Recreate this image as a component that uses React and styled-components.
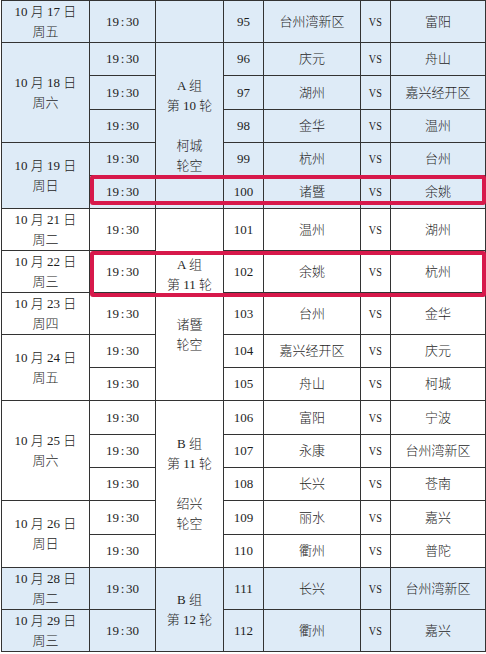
import React from 'react';
import styled, { createGlobalStyle } from 'styled-components';

const GlobalStyle = createGlobalStyle`
  html, body {
    margin: 0;
    padding: 0;
    background: #ffffff;
  }
  body {
    font-family: "Liberation Serif", "Noto Sans CJK SC", serif;
    color: #1e1e1e;
  }
`;

const Page = styled.div`
  padding-left: 1px;
`;

const Wrap = styled.div`
  position: relative;
  width: 485px;
`;

const Table = styled.table`
  border-collapse: collapse;
  table-layout: fixed;
  width: 484px;
  font-size: 13px;
  font-weight: 300;
  line-height: 14px;
`;

const Cell = styled.td`
  border: 1px solid #333;
  background: ${props => (props.$blue ? '#deebf7' : '#ffffff')};
  height: ${props => props.$h}px;
  box-sizing: border-box;
  padding: 0;
  text-align: center;
  vertical-align: middle;
  white-space: nowrap;
  overflow: hidden;
`;

const Line = styled.div`
  height: 20px;
  line-height: 20px;
  overflow: hidden;
`;

const Colon = styled.span`
  margin: 0 1.6px;
`;

const Vs = styled.span`
  display: inline-block;
  transform: scaleX(0.78);
`;

const Highlight = styled.div`
  position: absolute;
  left: ${props => props.$left}px;
  top: ${props => props.$top}px;
  width: ${props => props.$width}px;
  height: ${props => props.$height}px;
  box-sizing: border-box;
  border: 4.5px solid #d7194b;
  border-radius: 3px;
  pointer-events: none;
`;

const widths = [88, 66, 68, 40, 97, 30, 95];

const rows = [
  { date: ['10 月 17 日', '周五'], dateSpan: 1, group: { span: 1, lines: [], blue: true }, no: 95, home: '台州湾新区', away: '富阳', h: 42, blue: true },
  { date: ['10 月 18 日', '周六'], dateSpan: 3, group: { span: 5, lines: ['A 组', '第 10 轮', '', '柯城', '轮空'], blue: true }, no: 96, home: '庆元', away: '舟山', h: 33, blue: true },
  { no: 97, home: '湖州', away: '嘉兴经开区', h: 34, blue: true },
  { no: 98, home: '金华', away: '温州', h: 33, blue: true },
  { date: ['10 月 19 日', '周日'], dateSpan: 2, no: 99, home: '杭州', away: '台州', h: 33, blue: true },
  { no: 100, home: '诸暨', away: '余姚', h: 33, blue: true },
  { date: ['10 月 21 日', '周二'], dateSpan: 1, group: { span: 5, lines: ['A 组', '第 11 轮', '', '诸暨', '轮空'] }, no: 101, home: '温州', away: '湖州', h: 42 },
  { date: ['10 月 22 日', '周三'], dateSpan: 1, no: 102, home: '余姚', away: '杭州', h: 42 },
  { date: ['10 月 23 日', '周四'], dateSpan: 1, no: 103, home: '台州', away: '金华', h: 42 },
  { date: ['10 月 24 日', '周五'], dateSpan: 2, no: 104, home: '嘉兴经开区', away: '庆元', h: 33 },
  { no: 105, home: '舟山', away: '柯城', h: 33 },
  { date: ['10 月 25 日', '周六'], dateSpan: 3, group: { span: 5, lines: ['B 组', '第 11 轮', '', '绍兴', '轮空'] }, no: 106, home: '富阳', away: '宁波', h: 34 },
  { no: 107, home: '永康', away: '台州湾新区', h: 33 },
  { no: 108, home: '长兴', away: '苍南', h: 33 },
  { date: ['10 月 26 日', '周日'], dateSpan: 2, no: 109, home: '丽水', away: '嘉兴', h: 34 },
  { no: 110, home: '衢州', away: '普陀', h: 33 },
  { date: ['10 月 28 日', '周二'], dateSpan: 1, group: { span: 2, lines: ['B 组', '第 12 轮'], blue: true }, no: 111, home: '长兴', away: '台州湾新区', h: 42, blue: true },
  { date: ['10 月 29 日', '周三'], dateSpan: 1, no: 112, home: '衢州', away: '嘉兴', h: 42, blue: true },
];

const Schedule = () => (
  <Table>
    <colgroup>
      {widths.map((w, i) => (
        <col key={i} style={{ width: w }} />
      ))}
    </colgroup>
    <tbody>
      {rows.map(row => (
        <tr key={row.no}>
          {row.date && (
            <Cell rowSpan={row.dateSpan} $blue={row.blue} $h={row.h}>
              {row.date.map((t, i) => (
                <Line key={i}>{t}</Line>
              ))}
            </Cell>
          )}
          <Cell $blue={row.blue} $h={row.h}>19<Colon>:</Colon>30</Cell>
          {row.group && (
            <Cell rowSpan={row.group.span} $blue={row.group.blue} $h={row.h}>
              {row.group.lines.map((t, i) => (
                <Line key={i}>{t}</Line>
              ))}
            </Cell>
          )}
          <Cell $blue={row.blue} $h={row.h}>{row.no}</Cell>
          <Cell $blue={row.blue} $h={row.h}>{row.home}</Cell>
          <Cell $blue={row.blue} $h={row.h}><Vs>VS</Vs></Cell>
          <Cell $blue={row.blue} $h={row.h}>{row.away}</Cell>
        </tr>
      ))}
    </tbody>
  </Table>
);

export default function App() {
  return (
    <Page>
      <GlobalStyle />
      <Wrap>
        <Schedule />
        <Highlight $left={88.5} $top={174.5} $width={396} $height={30.5} />
        <Highlight $left={88.5} $top={251} $width={396} $height={46} />
      </Wrap>
    </Page>
  );
}
